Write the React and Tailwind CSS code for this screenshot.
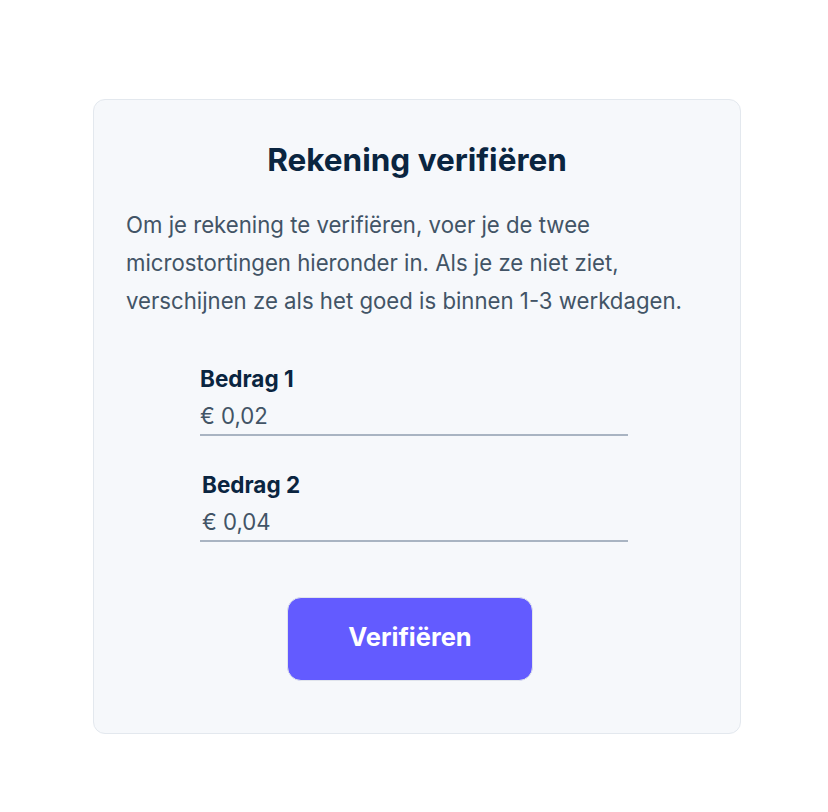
const FIELDS = [
  { label: 'Bedrag 1', value: '€ 0,02', shift: '' },
  { label: 'Bedrag 2', value: '€ 0,04', shift: 'pl-[2px]' },
];

const INTRO = [
  'Om je rekening te verifiëren, voer je de twee',
  'microstortingen hieronder in. Als je ze niet ziet,',
  'verschijnen ze als het goed is binnen 1-3 werkdagen.',
];

export default function App() {
  return (
    <div className="min-h-screen bg-white pt-[99px] font-['Inter',sans-serif]">
      <div className="ml-[93px] w-[648px] rounded-xl border border-[#e3e8ee] bg-[#f6f8fb] px-[32px] pt-[40px] pb-[52px]">
        <h1 className="text-center text-[31.5px] leading-[40px] font-bold text-[#0a2540]">
          Rekening verifiëren
        </h1>

        <p className="mt-[26px] text-[22.2px] leading-[38px] text-[#425466]">
          {INTRO.map((l) => (
            <span key={l} className="block">{l}</span>
          ))}
        </p>

        {/* amounts */}
        <div className="mt-[45px] ml-[74px] flex w-[428px] flex-col gap-[35px]">
          {FIELDS.map(({ label, value, shift }) => (
            <div key={label} className="flex flex-col">
              <label className={`text-[22.5px] leading-[28px] font-bold text-[#0a2540] ${shift}`}>{label}</label>
              <input
                type="text"
                defaultValue={value}
                className={`mt-[8px] h-[35px] w-full border-b-2 border-[#a9b4c2] bg-transparent pb-[5px] text-[22.2px] leading-[28px] text-[#425466] outline-none ${shift}`}
              />
            </div>
          ))}
        </div>

        <button
          type="button"
          className="mt-[55px] ml-[161px] h-[84px] w-[246px] rounded-[14px] border border-[#e0e4ec] bg-[#635bff] pb-[4px] text-[25.5px] font-bold text-white"
        >
          Verifiëren
        </button>
      </div>
    </div>
  );
}
